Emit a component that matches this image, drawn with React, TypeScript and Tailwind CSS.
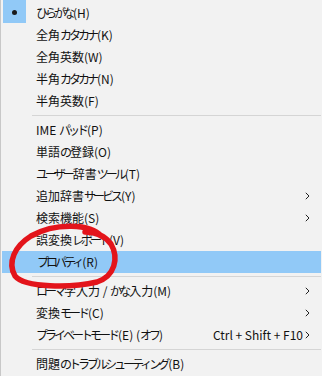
type Item =
  | { kind: "sep" }
  | { kind: "item"; label: string; sub?: boolean; shortcut?: string; active?: boolean; checked?: boolean };

const items: Item[] = [
  { kind: "item", label: "ひらがな(H)", checked: true },
  { kind: "item", label: "全角カタカナ(K)" },
  { kind: "item", label: "全角英数(W)" },
  { kind: "item", label: "半角カタカナ(N)" },
  { kind: "item", label: "半角英数(F)" },
  { kind: "sep" },
  { kind: "item", label: "IME パッド(P)" },
  { kind: "item", label: "単語の登録(O)" },
  { kind: "item", label: "ユーザー辞書ツール(T)" },
  { kind: "item", label: "追加辞書サービス(Y)", sub: true },
  { kind: "item", label: "検索機能(S)", sub: true },
  { kind: "item", label: "誤変換レポート(V)" },
  { kind: "item", label: "プロパティ(R)", active: true },
  { kind: "sep" },
  { kind: "item", label: "ローマ字入力 / かな入力(M)", sub: true },
  { kind: "item", label: "変換モード(C)", sub: true },
  { kind: "item", label: "プライベートモード(E) (オフ)", sub: true, shortcut: "Ctrl + Shift + F10" },
  { kind: "sep" },
  { kind: "item", label: "問題のトラブルシューティング(B)" },
];

// kana runs get squeezed, the installed font has no proportional kana
const Label = ({ text }: { text: string }) => {
  const parts = text.split(/([\u3040-\u30ff]+)/).filter(Boolean);
  return (
    <>
      {parts.map((p, i) =>
        /[\u3040-\u30ff]/.test(p) ? (
          <span key={i} className="tracking-[-3px] mr-[1px]">{p}</span>
        ) : (
          <span key={i}>{p}</span>
        )
      )}
    </>
  );
};

const Chevron = () => (
  <svg width="5" height="8" viewBox="0 0 5 8" fill="none">
    <path d="M0.8 0.8 L4 4 L0.8 7.2" stroke="#222" strokeWidth="1" />
  </svg>
);

const App: React.FC = () => {
  return (
    <div className="relative w-[322px] h-[376px] overflow-hidden bg-[#f2f2f2] border-l border-[#c8c8c8] text-[12px] text-[#111]">
      <div className="flex flex-col w-[320px] pt-[2px] [font-family:'Noto_Sans_CJK_JP','Noto_Sans',sans-serif]">
        {items.map((it, i) => {
          if (it.kind === "sep") {
            return (
              <div key={i} className="h-[7px] flex items-center pl-[31px]">
                <div className="h-px w-full bg-[#d5d5d5]" />
              </div>
            );
          }
          return (
            <div
              key={i}
              className={`relative flex items-center h-[22px] pl-[35px] pr-[11px] ${it.active ? "bg-[#91c9f7] ml-[1px]" : ""}`}
            >
              {it.checked && (
                <div className="absolute left-[2px] top-[-2px] w-[23px] h-[23px] bg-[#91c9f7] flex items-center justify-center">
                  <div className="w-[5px] h-[5px] rounded-full bg-[#1a1a1a] mt-[2px]" />
                </div>
              )}
              <span className="flex-1 whitespace-nowrap leading-none">
                <Label text={it.label} />
              </span>
              {it.shortcut && <span className="whitespace-nowrap leading-none mr-[2px]">{it.shortcut}</span>}
              <span className="w-[5px] flex items-center justify-end">{it.sub && <Chevron />}</span>
            </div>
          );
        })}
      </div>
      <svg className="absolute left-0 top-0 pointer-events-none" width="322" height="376" viewBox="0 0 322 376">
        <path
          d="M100 236 C 90 224, 55 222, 30 236 C 14 246, 6 262, 14 276 C 24 288, 70 288, 96 282 C 114 276, 118 258, 110 244 C 104 236, 96 232, 84 232"
          fill="none"
          stroke="#e3141b"
          strokeWidth="5.5"
          strokeLinecap="round"
        />
      </svg>
    </div>
  );
};

export default App;
